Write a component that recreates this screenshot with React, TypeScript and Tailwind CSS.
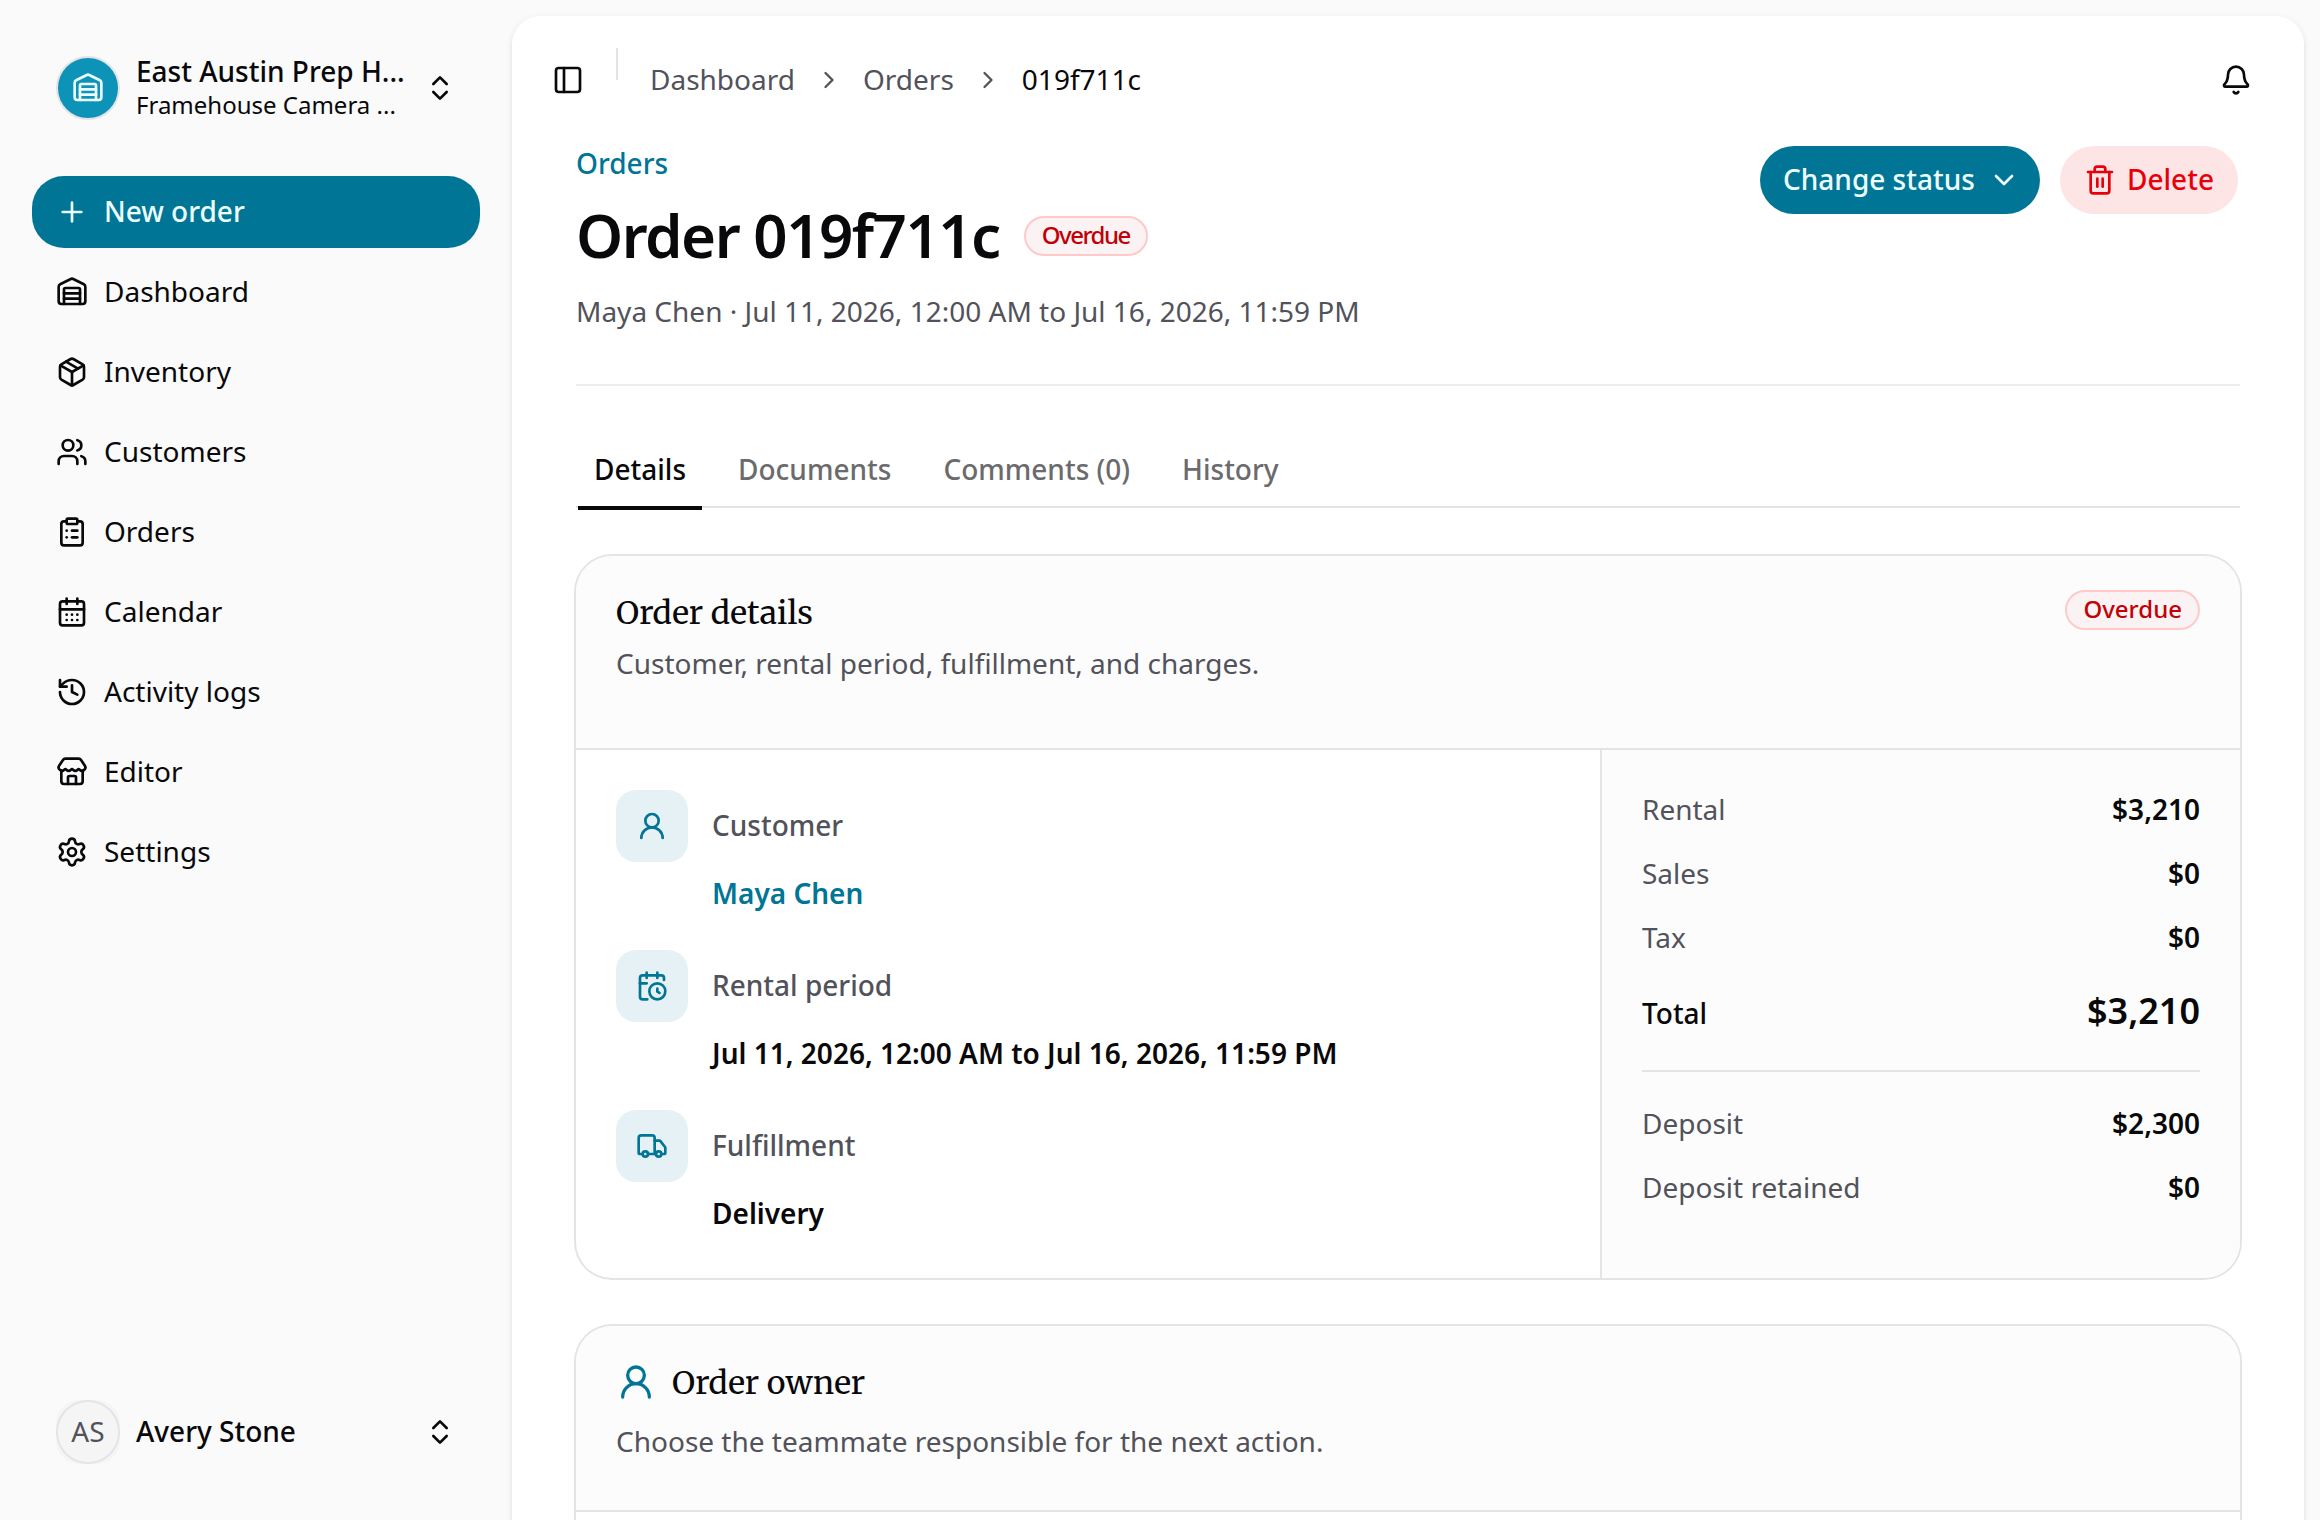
import type { ReactNode } from "react";
import {
  Bell,
  CalendarClock,
  CalendarDays,
  ChevronDown,
  ChevronRight,
  ChevronsUpDown,
  ClipboardList,
  History,
  Package,
  PanelLeft,
  Plus,
  Settings,
  Store,
  Trash2,
  Truck,
  UserRound,
  Users,
  Warehouse,
} from "lucide-react";

const navItems = [
  { label: "Dashboard", icon: Warehouse },
  { label: "Inventory", icon: Package },
  { label: "Customers", icon: Users },
  { label: "Orders", icon: ClipboardList },
  { label: "Calendar", icon: CalendarDays },
  { label: "Activity logs", icon: History },
  { label: "Editor", icon: Store },
  { label: "Settings", icon: Settings },
];

const tabs = ["Details", "Documents", "Comments (0)", "History"];

const details = [
  { label: "Customer", value: "Maya Chen", icon: UserRound, link: true },
  { label: "Rental period", value: "Jul 11, 2026, 12:00 AM to Jul 16, 2026, 11:59 PM", icon: CalendarClock },
  { label: "Fulfillment", value: "Delivery", icon: Truck },
];

const charges = [
  { label: "Rental", amount: "$3,210" },
  { label: "Sales", amount: "$0" },
  { label: "Tax", amount: "$0" },
];

const deposits = [
  { label: "Deposit", amount: "$2,300" },
  { label: "Deposit retained", amount: "$0" },
];

function StatusBadge({ children }: { children: ReactNode }) {
  return (
    <span className="flex h-10 shrink-0 items-center rounded-full border-2 border-[#ffc9c9] bg-[#fbf3f3] px-4 pb-0.5 text-[24px] leading-[30px] font-medium text-[#c10007]">
      {children}
    </span>
  );
}

function AmountRow({ label, amount }: { label: string; amount: string }) {
  return (
    <div className="flex justify-between pb-0.5">
      <span className="text-[#52525b]">{label}</span>
      <span className="font-semibold">{amount}</span>
    </div>
  );
}

function Sidebar() {
  return (
    <aside className="flex w-[512px] shrink-0 flex-col px-8 pt-10 pb-10">
      <button className="flex h-24 items-center gap-4 px-6 text-left">
        <span className="flex size-16 shrink-0 items-center justify-center rounded-full border-2 border-[#e4e4e7] bg-[#0e93b8] text-[#ecfeff]">
          <Warehouse className="size-8" />
        </span>
        <span className="w-[272px] min-w-0 pb-0.5 whitespace-nowrap">
          <span className="block leading-[35px] font-medium">East Austin Prep H...</span>
          <span className="block text-[24px] leading-8">Framehouse Camera ...</span>
        </span>
        <ChevronsUpDown className="size-8 shrink-0" />
      </button>

      <nav className="mt-10 flex flex-col gap-2">
        <button className="flex h-[72px] items-center gap-4 rounded-[32px] bg-[#007595] px-6 font-medium text-[#ecfeff]">
          <Plus className="size-8" />
          <span className="pb-0.5">New order</span>
        </button>
        {navItems.map(({ label, icon: Icon }) => (
          <a key={label} className="flex h-[72px] items-center gap-4 px-6">
            <Icon className="size-8" />
            <span className="pb-0.5">{label}</span>
          </a>
        ))}
      </nav>

      <button className="mt-auto flex h-24 items-center gap-4 px-6 text-left">
        <span className="flex size-16 shrink-0 rounded-[24px] bg-[#f6f5f6]">
          <span className="flex size-16 items-center justify-center rounded-full border-2 border-[#e4e4e7] pb-0.5 text-[#52525b]">
            AS
          </span>
        </span>
        <span className="w-[272px] pb-0.5 font-medium">Avery Stone</span>
        <ChevronsUpDown className="size-8 shrink-0" />
      </button>
    </aside>
  );
}

function TopBar() {
  return (
    <header className="flex h-32 shrink-0 items-center pr-[52px] pl-10">
      <PanelLeft className="size-8" />
      <span className="mt-8 ml-8 h-8 w-0.5 self-start bg-[#e4e4e7]" />
      <nav className="ml-8 flex items-center gap-5 text-[#52525b]">
        <a className="pb-0.5">Dashboard</a>
        <ChevronRight className="size-7" />
        <a className="pb-0.5">Orders</a>
        <ChevronRight className="size-7" />
        <span className="pb-0.5 text-[#09090b]">019f711c</span>
      </nav>
      <Bell className="ml-auto size-8" />
    </header>
  );
}

export default function App() {
  return (
    <div className="flex h-[1520px] w-[2320px] overflow-hidden bg-[#fafafa] font-['Noto_Sans',sans-serif] text-[28px] leading-[38px] text-[#09090b]">
      <Sidebar />

      <main className="mt-4 h-[1600px] w-[1792px] shrink-0 rounded-[28px] bg-white shadow-[0_2px_6px_rgba(0,0,0,0.1),0_2px_4px_-2px_rgba(0,0,0,0.1)]">
        <TopBar />

        <div className="px-16">
          <div className="flex items-start justify-between border-b-2 border-[#eeeeee] pb-[52px]">
            <div>
              <a className="block pb-0.5 font-medium text-[#007595]">Orders</a>
              <h1 className="mt-4 flex h-[72px] items-center gap-6 text-[60px] leading-[70px] font-semibold tracking-[-1.5px]">
                <span className="pb-0.5">Order 019f711c</span>
                <StatusBadge>Overdue</StatusBadge>
              </h1>
              <p className="mt-5 pb-0.5 text-[#52525b]">
                Maya Chen · Jul 11, 2026, 12:00 AM to Jul 16, 2026, 11:59 PM
              </p>
            </div>
            <div className="mt-0.5 mr-0.5 flex gap-5">
              <button className="flex h-[68px] w-[280px] items-center justify-between rounded-full bg-[#007595] pr-5 pl-[23px] font-medium text-[#ecfeff]">
                <span className="pb-0.5">Change status</span>
                <ChevronDown className="size-8" />
              </button>
              <button className="flex h-[68px] w-[178px] items-center gap-[11px] rounded-full bg-[#fde5e6] pl-6 font-medium text-[#e7000b]">
                <Trash2 className="size-8 shrink-0" />
                <span className="pb-0.5">Delete</span>
              </button>
            </div>
          </div>

          <div className="mt-12 flex h-[74px] gap-4 border-b-2 border-[#e4e4e7]">
            {tabs.map((tab, i) => (
              <button
                key={tab}
                className={
                  i === 0
                    ? "relative h-[72px] px-[18px] pb-0.5 font-medium after:absolute after:-bottom-1 after:left-0.5 after:right-0.5 after:h-1 after:bg-[#09090b]"
                    : "h-[72px] px-[18px] pb-0.5 font-medium text-[#6b6b6d]"
                }
              >
                {tab}
              </button>
            ))}
          </div>

          <section className="mt-12 overflow-hidden rounded-[36px] ring-2 ring-[#e4e4e7]">
            <div className="flex h-[194px] items-start justify-between border-b-2 border-[#e4e4e7] bg-[#fcfcfc] px-10 pt-[34px]">
              <div>
                <h2 className="pt-px font-['Merriweather','Noto_Serif','DejaVu_Serif',serif] text-[32px] leading-[44px]">
                  Order details
                </h2>
                <p className="mt-[9px] text-[#52525b]">Customer, rental period, fulfillment, and charges.</p>
              </div>
              <StatusBadge>Overdue</StatusBadge>
            </div>
            <div className="grid grid-cols-[1fr_640px]">
              <dl className="flex flex-col gap-9 px-10 pt-10 pb-11">
                {details.map(({ label, value, icon: Icon, link }) => (
                  <div key={label} className="grid grid-cols-[72px_1fr] items-center gap-x-6 gap-y-3">
                    <span className="flex size-[72px] items-center justify-center rounded-[20px] bg-[#e6f1f5] text-[#007595]">
                      <Icon className="size-8" />
                    </span>
                    <dt className="pb-0.5 font-medium text-[#52525b]">{label}</dt>
                    <dd
                      className={
                        link ? "col-start-2 pb-0.5 font-semibold text-[#007595]" : "col-start-2 pb-0.5 font-semibold"
                      }
                    >
                      {value}
                    </dd>
                  </div>
                ))}
              </dl>
              <div className="border-l-2 border-[#e4e4e7] bg-[#fcfcfc] p-10">
                <div className="flex flex-col gap-6 border-b-2 border-[#e4e4e7] pb-[31px]">
                  {charges.map((row) => (
                    <AmountRow key={row.label} {...row} />
                  ))}
                  <div className="flex items-baseline justify-between pt-px">
                    <span className="font-medium">Total</span>
                    <span className="text-[36px] leading-[56px] font-semibold">$3,210</span>
                  </div>
                </div>
                <div className="flex flex-col gap-6 pt-8">
                  {deposits.map((row) => (
                    <AmountRow key={row.label} {...row} />
                  ))}
                </div>
              </div>
            </div>
          </section>

          <section className="mt-12 overflow-hidden rounded-[36px] ring-2 ring-[#e4e4e7]">
            <div className="h-[186px] border-b-2 border-[#e4e4e7] bg-[#fcfcfc] px-10 pt-[34px]">
              <h2 className="flex h-11 items-center gap-4 font-['Merriweather','Noto_Serif','DejaVu_Serif',serif] text-[32px] leading-[44px]">
                <UserRound className="size-10 text-[#007595]" />
                <span className="pt-0.5">Order owner</span>
              </h2>
              <p className="mt-[18px] text-[#52525b]">Choose the teammate responsible for the next action.</p>
            </div>
            <div className="h-40" />
          </section>
        </div>
      </main>
    </div>
  );
}
